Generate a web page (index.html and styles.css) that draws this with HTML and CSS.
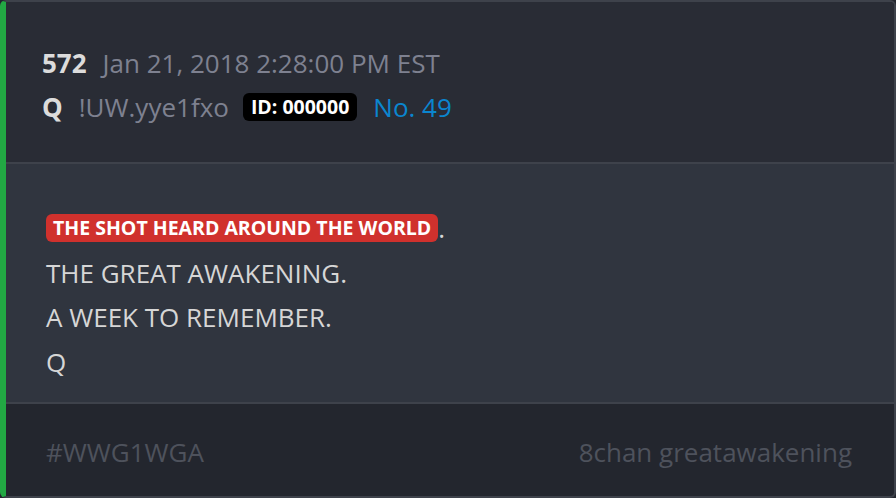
FILE: index.html
```html
<!DOCTYPE html>
<html lang="en">
<head>
  <meta charset="UTF-8" />
  <title>Drop 572</title>
  <meta name="viewport" content="width=device-width, initial-scale=1" />
  <link rel="stylesheet" href="styles.css">
</head>
<body>
  <div class="post-card">
    <div class="post-header">
      <div class="meta-row">
        <span class="post-num">572</span>
        <span class="post-date">Jan 21, 2018 2:28:00 PM EST</span>
      </div>
      <div class="meta-row">
        <span class="author">Q</span>
        <span class="trip">!UW.yye1fxo</span>
        <span class="user-id">ID: 000000</span>
        <a class="post-link" href="#">No. 49</a>
      </div>
    </div>

    <div class="post-body">
      <p><span class="highlight">THE SHOT HEARD AROUND THE WORLD</span>.</p>
      <p>THE GREAT AWAKENING.</p>
      <p>A WEEK TO REMEMBER.</p>
      <p>Q</p>
    </div>

    <div class="post-footer">
      <span>#WWG1WGA</span>
      <span>8chan greatawakening</span>
    </div>
  </div>
</body>
</html>
```

FILE: styles.css
```css
* {
  box-sizing: border-box;
}

body {
  margin: 0;
  padding: 0;
  font-family: 'Open Sans', 'Noto Sans', sans-serif;
  background: #23262e;
}

.post-card {
  width: 896px;
  height: 498px;
  display: flex;
  flex-direction: column;
  border: 2px solid #3e424b;
  border-left: 6px solid #22a843;
  border-radius: 6px;
  overflow: hidden;
  background-color: #23262e;
}

.post-header {
  background-color: #292c35;
  padding: 39px 36px 33px;
  border-bottom: 2px solid #3e424b;
}

.meta-row {
  display: flex;
  align-items: center;
  gap: 16px;
  height: 44px;
  font-size: 26px;
}

.meta-row .trip {
  margin-right: -2px;
}

.post-num,
.author {
  font-weight: 700;
  color: #dcdcdc;
}

.post-date,
.trip {
  color: #7e8190;
}

.user-id {
  background-color: #000;
  color: #fff;
  font-size: 19.5px;
  font-weight: 700;
  line-height: 28px;
  padding: 0 8px;
  border-radius: 6px;
}

.post-link {
  color: #0b86cf;
  text-decoration: none;
}

.post-body {
  flex: 1;
  background-color: #30353f;
  padding: 42px 40px 0;
  border-bottom: 2px solid #3e424b;
}

.post-body p {
  margin: 0;
  height: 44.5px;
  display: flex;
  align-items: center;
  font-size: 26px;
  color: #d6d6d6;
}

.highlight {
  background-color: #d0312d;
  color: #fff;
  font-size: 19.5px;
  font-weight: 700;
  line-height: 28px;
  padding: 0 7px;
  border-radius: 6px;
}

.post-footer {
  height: 92px;
  display: flex;
  align-items: center;
  justify-content: space-between;
  padding: 3px 42px 0 40px;
  font-size: 26px;
  color: #4e525c;
}
```
